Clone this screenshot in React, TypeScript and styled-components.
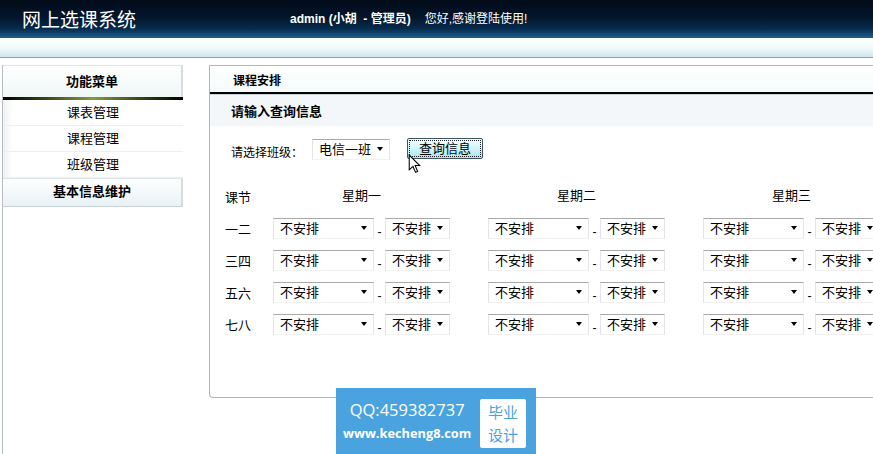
import styled, { createGlobalStyle } from "styled-components";

const GlobalStyle = createGlobalStyle`
  html, body {
    margin: 0;
    padding: 0;
    background: #fff;
  }
  body {
    font-family: "Liberation Sans", "Noto Sans CJK SC", sans-serif;
    font-size: 12px;
    color: #000;
  }
`;

const days = ["星期一", "星期二", "星期三"];
const periods = ["一二", "三四", "五六", "七八"];
const menuItems = ["课表管理", "课程管理", "班级管理"];

function Select({ text, width }: { text: string; width: number }) {
  return (
    <SelectBox $width={width}>
      <span>{text}</span>
      <Arrow />
    </SelectBox>
  );
}

function App() {
  return (
    <Page>
      <GlobalStyle />
      <TopBar>
        <Title>网上选课系统</Title>
        <UserInfo>
          <b>admin (小胡&nbsp; - 管理员)</b>
          <span>您好,感谢登陆使用!</span>
        </UserInfo>
      </TopBar>
      <Band />
      <Content>
        <SideCol>
          <MenuHead>功能菜单</MenuHead>
          <MenuLine />
          {menuItems.map((m) => (
            <MenuItem key={m}>{m}</MenuItem>
          ))}
          <MenuGroup>基本信息维护</MenuGroup>
        </SideCol>
        <Panel>
          <PanelHead>课程安排</PanelHead>
          <SubHead>请输入查询信息</SubHead>
          <FormRow>
            <span>请选择班级：</span>
            <Select text="电信一班" width={78} />
            <QueryButton>
              <span>查询信息</span>
            </QueryButton>
            <Cursor viewBox="0 0 12 19" width="13" height="20">
              <path
                d="M1 1 L1 15 L4.5 11.8 L7 17.5 L9 16.6 L6.6 11 L11 11 Z"
                fill="#fff"
                stroke="#000"
                strokeWidth="1"
              />
            </Cursor>
          </FormRow>
          <Table>
            <HeadCell>课节</HeadCell>
            {days.map((d) => (
              <DayCell key={d}>{d}</DayCell>
            ))}
            {periods.map((p) => (
              <Row key={p}>
                <HeadCell>{p}</HeadCell>
                {days.map((d) => (
                  <Group key={d}>
                    <Select text="不安排" width={101} />
                    <Dash>-</Dash>
                    <Select text="不安排" width={65} />
                  </Group>
                ))}
              </Row>
            ))}
          </Table>
        </Panel>
      </Content>
      <Badge>
        <BadgeText>
          <Qq>QQ:459382737</Qq>
          <Site>www.kecheng8.com</Site>
        </BadgeText>
        <BadgeTag>
          <span>毕业</span>
          <span>设计</span>
        </BadgeTag>
      </Badge>
    </Page>
  );
}

const Page = styled.div`
  position: relative;
  width: 873px;
  height: 454px;
  overflow: hidden;
  background: #fff;
`;
const TopBar = styled.div`
  height: 38px;
  display: flex;
  align-items: flex-start;
  background: linear-gradient(
    #020b18 0%,
    #03152b 45%,
    #062a4c 75%,
    #0f4670 88%,
    #245f88 100%
  );
`;
const Title = styled.div`
  margin: 6px 0 0 22px;
  width: 268px;
  color: #fff;
  font-family: "Noto Sans CJK SC", sans-serif;
  font-size: 19px;
  line-height: 26px;
`;
const UserInfo = styled.div`
  margin-top: 11px;
  display: flex;
  gap: 14px;
  color: #fff;
  font-size: 12px;
  line-height: 16px;
  & b {
    font-weight: 700;
  }
`;
const Band = styled.div`
  height: 19px;
  background: linear-gradient(#fbffff 0%, #f2fbfc 50%, #cfe6ec 100%);
  border-bottom: 1px solid #8ea6ae;
`;
const Content = styled.div`
  display: flex;
  padding-top: 7px;
`;
const SideCol = styled.div`
  flex: none;
  margin-left: 2px;
  width: 180px;
  height: 400px;
  border-left: 1px solid #b6bec2;
  display: flex;
  flex-direction: column;
`;
const MenuHead = styled.div`
  height: 31px;
  line-height: 31px;
  text-align: center;
  font-size: 13px;
  font-weight: 700;
  background: linear-gradient(#ffffff, #eef7f7);
  border-top: 1px solid #dfe6e8;
  border-right: 2px solid #d8dcdc;
`;
const MenuLine = styled.div`
  height: 3px;
  background: linear-gradient(90deg, #000 0%, #2f3a10 20%, #8a9a3a 50%, #2f3a10 80%, #000 100%);
`;
const MenuItem = styled.div`
  height: 25px;
  line-height: 26px;
  text-align: center;
  font-size: 13px;
  border-bottom: 1px solid #eef0f0;
  background: linear-gradient(90deg, #eef2f2 0px, #ffffff 10px);
`;
const MenuGroup = styled.div`
  height: 27px;
  line-height: 26px;
  text-align: center;
  font-size: 13px;
  font-weight: 700;
  background: linear-gradient(#ffffff, #e8f2f6);
  border-top: 1px solid #dfe6e8;
  border-bottom: 1px solid #c8d0d4;
  border-right: 2px solid #d8dcdc;
`;
const Panel = styled.div`
  margin-left: 26px;
  flex: 1;
  min-width: 0;
  overflow: hidden;
  height: 331px;
  border: 1px solid #a7b9c2;
  border-right: none;
  border-radius: 0 0 0 4px;
`;
const PanelHead = styled.div`
  height: 26px;
  line-height: 30px;
  padding-left: 23px;
  font-weight: 700;
  background: linear-gradient(#ffffff, #f4fbfb);
  border-bottom: 2px solid #000;
`;
const SubHead = styled.div`
  height: 31px;
  line-height: 34px;
  padding-left: 21px;
  font-size: 13px;
  font-weight: 700;
  background: #f3f7fa;
  border-top: 1px solid #c9d1d5;
`;
const FormRow = styled.div`
  position: relative;
  height: 22px;
  margin-top: 12px;
  padding-left: 21px;
  display: flex;
  align-items: center;
  & > span {
    width: 81px;
    margin-top: 4px;
  }
  & > div {
    margin-right: 17px;
  }
`;
const QueryButton = styled.button`
  width: 76px;
  height: 21px;
  margin-top: -2px;
  padding: 1px;
  border: 1px solid #3b5666;
  border-radius: 2px;
  background: linear-gradient(#f4feff 0%, #d6f5fa 45%, #a6e6f1 100%);
  font-family: inherit;
  font-size: 13px;
  color: #000;
  & span {
    display: block;
    height: 17px;
    line-height: 15px;
    border: 1px dotted #222;
    box-sizing: border-box;
  }
`;
const Cursor = styled.svg`
  position: absolute;
  left: 198px;
  top: 16px;
`;
const SelectBox = styled.div<{ $width: number }>`
  flex: none;
  box-sizing: border-box;
  width: ${(p) => p.$width}px;
  height: 21px;
  padding: 0 6px 0 6px;
  display: flex;
  align-items: center;
  justify-content: space-between;
  background: #fff;
  border-top: 1px solid #a9a9a9;
  border-left: 1px solid #e4e4e4;
  border-right: 1px solid #e4e4e4;
  border-bottom: 1px solid #f2f2f2;
  font-size: 13px;
  line-height: 19px;
`;
const Arrow = styled.i`
  width: 0;
  height: 0;
  border-left: 3.5px solid transparent;
  border-right: 3.5px solid transparent;
  border-top: 4px solid #000;
`;
const Table = styled.div`
  margin-top: 20px;
  display: grid;
  grid-template-columns: 63px repeat(3, 215px);
  grid-auto-rows: 32px;
`;
const Row = styled.div`
  display: contents;
`;
const HeadCell = styled.div`
  padding-left: 15px;
  font-size: 13px;
  display: flex;
  align-items: center;
`;
const DayCell = styled.div`
  width: 177px;
  font-size: 13px;
  display: flex;
  align-items: center;
  justify-content: center;
  margin-top: -3px;
`;
const Group = styled.div`
  display: flex;
  align-items: center;
`;
const Dash = styled.span`
  width: 11px;
  text-align: center;
  font-size: 12px;
  line-height: 12px;
  margin-top: 8px;
`;
const Badge = styled.div`
  position: absolute;
  left: 336px;
  top: 388px;
  width: 200px;
  height: 66px;
  background: #4aa3df;
  display: flex;
  align-items: flex-start;
  justify-content: space-between;
  padding: 11px 10px 0 7px;
  box-sizing: border-box;
`;
const BadgeText = styled.div`
  display: flex;
  flex-direction: column;
  align-items: center;
  color: #fff;
`;
const Qq = styled.div`
  font-family: "Open Sans", "Noto Sans", sans-serif;
  font-size: 16.5px;
  line-height: 22px;
`;
const Site = styled.div`
  margin-top: 2px;
  font-family: "Open Sans", "Noto Sans", sans-serif;
  font-weight: 700;
  font-size: 12.8px;
  line-height: 20px;
`;
const BadgeTag = styled.div`
  width: 46px;
  height: 49px;
  background: #fff;
  border-radius: 2px;
  color: #4aa3df;
  display: flex;
  flex-direction: column;
  align-items: center;
  justify-content: center;
  gap: 1px;
  font-family: "Noto Sans CJK SC", sans-serif;
  font-size: 15px;
  line-height: 22px;
  box-sizing: border-box;
`;

export default App;
